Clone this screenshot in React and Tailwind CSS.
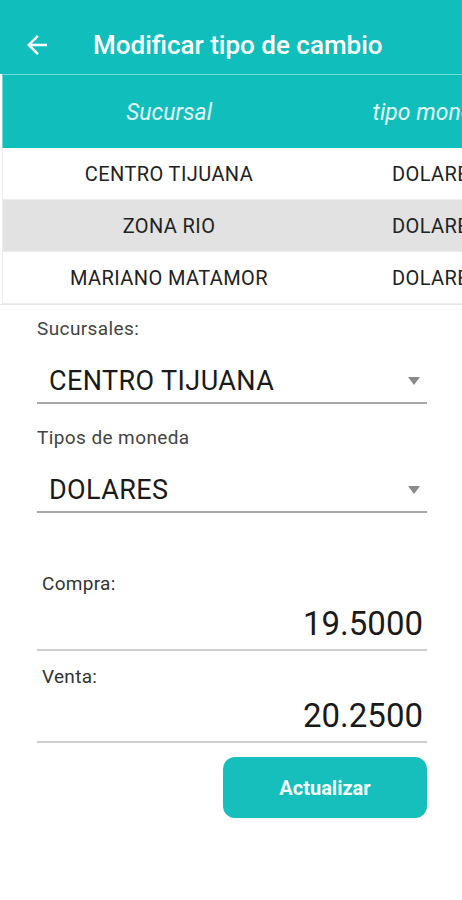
import React from "react";

const rows = [
  { sucursal: "CENTRO TIJUANA", moneda: "DOLARES", gray: false },
  { sucursal: "ZONA RIO", moneda: "DOLARES", gray: true },
  { sucursal: "MARIANO MATAMOR", moneda: "DOLARES", gray: false },
];

function SelectField({ label, value, top }) {
  return (
    <div className={top}>
      <div className="text-[19px] leading-[20px] tracking-[0.4px] text-[#444]">{label}</div>
      <div className="flex h-[65px] items-end justify-between border-b-2 border-[#a8a8a8] pb-[6px] pl-[12px] pr-[7px]">
        <span className="text-[27px] leading-[30px] tracking-[0.4px] text-[#1a1a1a]">{value}</span>
        <span className="mb-[11px] h-0 w-0 border-x-[6px] border-t-[8px] border-x-transparent border-t-[#8a8a8a]" />
      </div>
    </div>
  );
}

function NumberField({ label, value, top, h }) {
  return (
    <div className={top}>
      <div className="pl-[5px] text-[19px] leading-[20px] tracking-[0.3px] text-[#333]">{label}</div>
      <div className={`flex ${h} items-end justify-end border-b-2 border-[#cfcfcf] pb-[6px] pr-[4px]`}>
        <span className="text-[33px] leading-[38px] text-[#1a1a1a]">{value}</span>
      </div>
    </div>
  );
}

export default function App() {
  return (
    <div className="min-h-[900px] w-[462px] overflow-hidden bg-white font-['Roboto',sans-serif]">
      {/* Toolbar */}
      <header className="flex h-[74px] items-center bg-[#10bfbc] pt-[16px] text-white">
        <svg viewBox="0 0 24 24" className="ml-[22px] h-[30px] w-[30px]" fill="white">
          <path d="M20 11H7.83l5.59-5.59L12 4l-8 8 8 8 1.41-1.41L7.83 13H20v-2z" />
        </svg>
        <h1 className="ml-[41px] text-[26px] font-medium">Modificar tipo de cambio</h1>
      </header>

      {/* Table */}
      <div className="overflow-hidden border-b border-[#e8e8e8] pl-[2px]">
        <div className="w-[560px]">
          <div className="flex h-[74px] items-center border-l border-t border-[#6fdad7] bg-[#10bfbc] pt-[4px] text-[23px] italic text-[#e4f8f7]">
            <div className="w-[332px] text-center">Sucursal</div>
            <div className="w-[200px] text-center">tipo moneda</div>
          </div>
          {rows.map((r, i) => (
            <div
              key={i}
              className={`flex h-[52px] items-center border-l border-b border-[#ececec] text-[20px] tracking-[0.4px] text-[#222] ${
                r.gray ? "bg-[#e2e2e2]" : "bg-white"
              }`}
            >
              <div className="w-[332px] text-center">{r.sucursal}</div>
              <div className="w-[200px] pl-[57px]">{r.moneda}</div>
            </div>
          ))}
        </div>
      </div>

      {/* Form */}
      <div className="pl-[37px] pr-[35px]">
        <SelectField label="Sucursales:" value="CENTRO TIJUANA" top="pt-[14px]" />
        <SelectField label="Tipos de moneda" value="DOLARES" top="pt-[24px]" />
        <NumberField label="Compra:" value="19.5000" top="pt-[61px]" h="h-[57px]" />
        <NumberField label="Venta:" value="20.2500" top="pt-[16px]" h="h-[56px]" />
        <div className="flex justify-end pt-[14px]">
          <button className="h-[61px] w-[204px] rounded-[12px] bg-[#16bfbb] text-[20px] font-bold text-[#f4fffe]">
            Actualizar
          </button>
        </div>
      </div>
    </div>
  );
}
